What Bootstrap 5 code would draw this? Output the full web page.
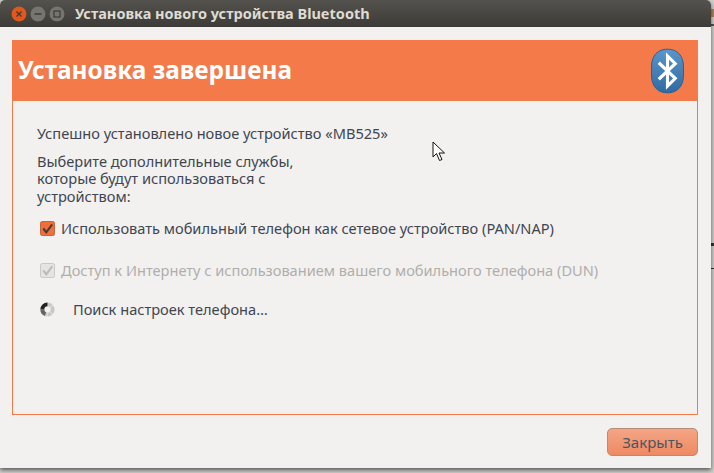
<!DOCTYPE html>
<html lang="ru"><head><meta charset="utf-8"><title>Bluetooth</title>
<link href="https://cdn.jsdelivr.net/npm/bootstrap@5.3.0/dist/css/bootstrap.min.css" rel="stylesheet">
<style>
html,body{width:714px;height:473px;overflow:hidden;margin:0}
body{background:#cfcecb;font-family:"Noto Sans","Open Sans",sans-serif;font-size:14.6px;color:#3f4650;position:relative}
.wnd{position:relative;z-index:1;width:711px;height:468px;background:#f2f1f0;box-shadow:0 2px 4px rgba(0,0,0,.6);border-radius:5px 5px 0 0}
.ttl{height:27px;background:linear-gradient(#54524d,#3c3b37);border-radius:5px 5px 0 0;padding-left:11px;color:#dfdbd2;font-weight:700;font-size:14.5px;flex:none}
.wbtns{gap:3px;width:64px}
.wbtn{width:16px;height:16px;border-radius:50%;display:block}
.frame{margin:13px 13px 0 12px;height:375px;border:1px solid #f47a4a;flex:none}
.hdr{height:61px;background:#f47a4a;padding:0 14px 0 6px;flex:none;margin:-1px -1px 0 -1px}
.hdr h1{font-size:24.4px;font-weight:700;color:#fff;margin:0;line-height:1}
.bdy{padding:24px 24px 0}
.bdy p{margin:0;line-height:17.500px}
.msg{margin-bottom:10px!important}
.desc{width:290px;margin-bottom:14px!important}
.opt{height:19px;gap:6px;line-height:19px;margin-bottom:23px;margin-left:3px;white-space:nowrap}
.opt.off{color:#b0aeab}
.spin{gap:18px;height:19px;margin-left:3px;margin-top:-3px}
.footbar{padding:13px 13px 0 0}
.close-b{width:91px;height:28px;padding:0;font-size:15px;color:#4b5560;border:1px solid #b58c78;border-radius:5px;background:linear-gradient(#f4a586,#ee8a62);line-height:26px}
.ptr{position:absolute;z-index:2;left:432px;top:141px}
.behind{position:absolute;left:711px;width:3px}
.b1{top:9px;height:8px;background:#b5804f}
.b2{top:24px;height:2px;background:#555}
.b3{top:243px;height:3px;background:#333}
.b4{top:268px;height:1px;background:#333}
</style></head><body>
<div class="behind b1"></div><div class="behind b2"></div><div class="behind b3"></div><div class="behind b4"></div>
<div class="wnd d-flex flex-column">
 <div class="ttl d-flex align-items-center">
  <div class="wbtns d-flex align-items-center">
   <svg class="wbtn" viewBox="0 0 16 16"><circle cx="8" cy="8" r="7.500" fill="#e2571c"/><path d="M5.500 5.500l5 5M10.500 5.500l-5 5" stroke="#3c3b37" stroke-width="1.300"/></svg>
   <svg class="wbtn" viewBox="0 0 16 16"><circle cx="8" cy="8" r="7.500" fill="#77756f"/><path d="M4.500 8h7" stroke="#3c3b37" stroke-width="1.300"/></svg>
   <svg class="wbtn" viewBox="0 0 16 16"><circle cx="8" cy="8" r="7.500" fill="#77756f"/><rect x="5" y="5" width="6" height="6" fill="none" stroke="#3c3b37" stroke-width="1.200"/></svg>
  </div>
  <span>Установка нового устройства Bluetooth</span>
 </div>
 <div class="frame d-flex flex-column">
  <div class="hdr d-flex align-items-center justify-content-between">
   <h1>Установка завершена</h1>
   <svg width="33" height="46" viewBox="0 0 34 46"><defs><linearGradient id="bg" x1="0" y1="0" x2="0" y2="1"><stop offset="0" stop-color="#5b96c9"/><stop offset="1" stop-color="#2f6ba3"/></linearGradient></defs><path d="M17 .5C27 .5 33.500 7 33.500 19V27C33.500 39 27 45.500 17 45.500S.5 39 .5 27V19C.5 7 7 .5 17 .5Z" fill="url(#bg)" stroke="#2c5f90"/><path d="M8 14.500L25 30.500L17 38.500V7.500L25 15.500L8 31.500" fill="none" stroke="#fff" stroke-width="3.200"/></svg>
  </div>
  <div class="bdy">
   <p class="msg">Успешно установлено новое устройство «MB525»</p>
   <p class="desc">Выберите дополнительные службы, которые будут использоваться с устройством:</p>
   <div class="opt d-flex align-items-center">
    <svg width="15" height="15" viewBox="0 0 16 16"><rect x=".5" y=".5" width="15" height="15" rx="2" fill="#ee6f3c" stroke="#b5623d"/><path d="M3.500 8l3.200 4L13 3.500" fill="none" stroke="#4a3a32" stroke-width="2.200"/></svg>
    <span>Использовать мобильный телефон как сетевое устройство (PAN/NAP)</span>
   </div>
   <div class="opt off d-flex align-items-center">
    <svg width="15" height="15" viewBox="0 0 16 16"><rect x=".5" y=".5" width="15" height="15" rx="2" fill="#e6e4e2" stroke="#c6c4c2"/><path d="M3.500 8l3.200 4L13 3.500" fill="none" stroke="#bdbbb8" stroke-width="2.200"/></svg>
    <span>Доступ к Интернету с использованием вашего мобильного телефона (DUN)</span>
   </div>
   <div class="spin d-flex align-items-center">
    <svg width="15" height="15" viewBox="0 0 14 14" fill="none" stroke-width="3.600"><circle cx="7" cy="7" r="4.800" stroke="#c9c8c6" stroke-dasharray="3.300 .47"/><path d="M7 2.200A4.800 4.800 0 0 0 2.200 7" stroke="#222"/><path d="M2.200 7A4.800 4.800 0 0 0 5 11.400" stroke="#666"/></svg>
    <span>Поиск настроек телефона…</span>
   </div>
  </div>
 </div>
 <div class="footbar d-flex justify-content-end">
  <button type="button" class="btn close-b">Закрыть</button>
 </div>
</div>
<svg class="ptr" width="14" height="21" viewBox="0 0 14 21"><path d="M1 1V16L4.500 12.500L7.500 19.500L10 18.500L7 12H12.500Z" fill="#fff" stroke="#111" stroke-width="1"/></svg>
</body></html>
